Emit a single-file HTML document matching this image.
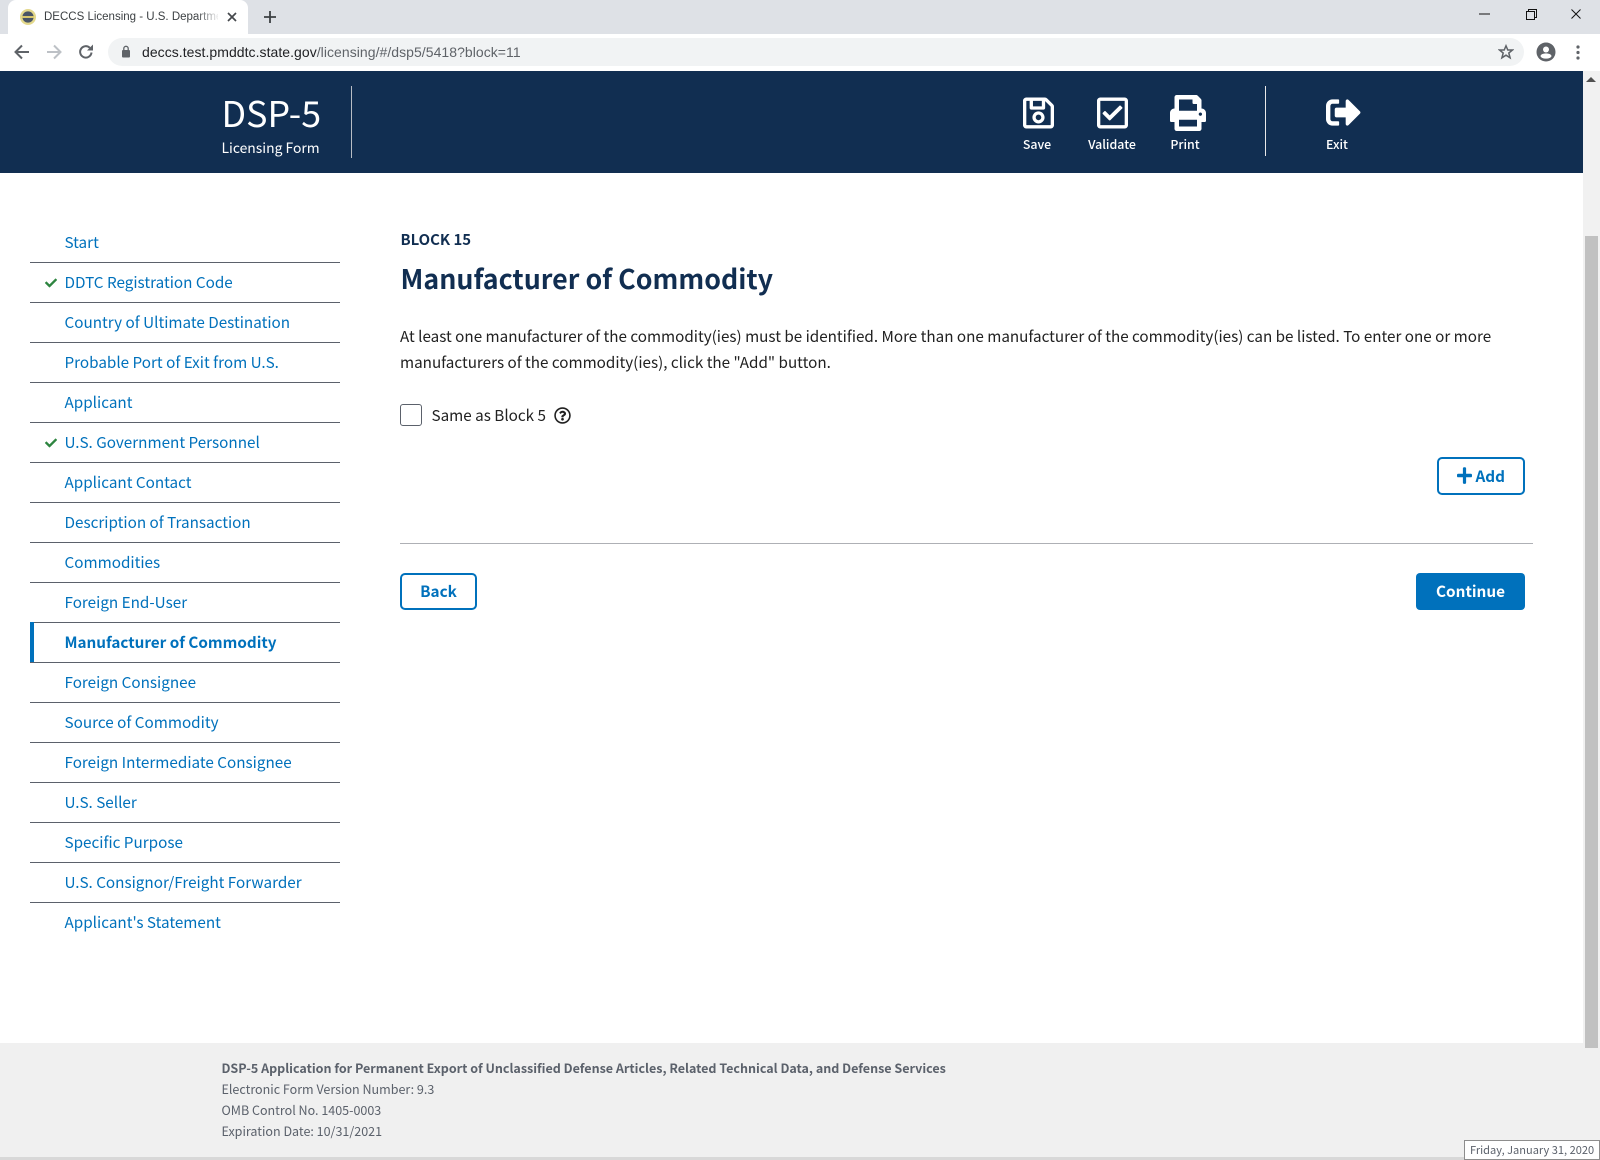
<!DOCTYPE html>
<html lang="en">
<head>
<meta charset="utf-8">
<title>DECCS Licensing - U.S. Department of State</title>
<style>
html,body{margin:0;padding:0;width:1600px;height:1160px;overflow:hidden;background:#fff}
body{position:relative;font-family:"Noto Sans CJK JP","Liberation Sans",sans-serif;color:#212121}
.a{position:absolute}
.t{position:absolute;white-space:nowrap;line-height:20px}
.c{transform:translateX(-50%)}
.nav{font-size:15.25px;color:#0071bc;left:64.5px}
.ln{position:absolute;left:30px;width:310px;height:1px;background:#5b616b}
.hl{font-size:12.4px;color:#fff;font-weight:500}
.ft{font-size:12.53px;color:#5b616b;left:221.5px}
svg{position:absolute;display:block}
.chk{left:45px;width:12px;height:12px;fill:#2e8540}
.ch{font-family:"Liberation Sans",Arial,sans-serif}
.btn{position:absolute;box-sizing:border-box;border:2px solid #0071bc;border-radius:5px;background:#fff}
.bt{font-size:15.3px;font-weight:700;color:#0071bc}
</style>
</head>
<body>
<!-- browser chrome -->
<div class="a" style="left:0;top:0;width:1600px;height:34px;background:#dee1e6"></div>
<div class="a" style="left:0;top:34px;width:1600px;height:37px;background:#fff"></div>
<div class="a" style="left:8px;top:0;width:240px;height:34px;background:#fff;border-radius:8px 8px 0 0"></div>
<svg style="left:20px;top:9px" width="16" height="16" viewBox="0 0 16 16"><circle cx="8" cy="8" r="8" fill="#e3d88c"/><circle cx="8" cy="8" r="5.6" fill="#4a5566"/><rect x="2" y="7" width="12" height="2" fill="#d8c76e"/></svg>
<div class="t ch" style="left:44px;top:7px;font-size:11.5px;color:#3c4043;width:174px;overflow:hidden">DECCS Licensing - U.S. Department of State</div>
<div class="a" style="left:196px;top:6px;width:24px;height:22px;background:linear-gradient(90deg,rgba(255,255,255,0),#fff)"></div>
<svg style="left:227px;top:12px" width="10" height="10" viewBox="0 0 10 10"><path d="M1 1L9 9M9 1L1 9" stroke="#45484c" stroke-width="1.7"/></svg>
<svg style="left:263px;top:10px" width="14" height="14" viewBox="0 0 14 14"><path d="M7 1V13M1 7H13" stroke="#3c4043" stroke-width="1.8"/></svg>
<svg style="left:1479px;top:13px" width="12" height="2" viewBox="0 0 12 2"><path d="M0 1H11" stroke="#111" stroke-width="1"/></svg>
<svg style="left:1526px;top:9px" width="11" height="11" viewBox="0 0 11 11"><path d="M.5 2.500H8.500V10.500H.5ZM2.500 2.500V.5H10.500V8.500H8.500" fill="none" stroke="#111"/></svg>
<svg style="left:1571px;top:9px" width="10" height="10" viewBox="0 0 10 10"><path d="M.5 .5L9.500 9.500M9.500 .5L.5 9.500" stroke="#111" stroke-width="1"/></svg>
<svg style="left:14px;top:44px" width="16" height="16" viewBox="0 0 16 16"><path d="M15 8H2M8 1.500L1.500 8L8 14.500" fill="none" stroke="#5f6368" stroke-width="2"/></svg>
<svg style="left:46px;top:44px" width="16" height="16" viewBox="0 0 16 16"><path d="M1 8H14M8 1.500L14.500 8L8 14.500" fill="none" stroke="#bdc1c6" stroke-width="2"/></svg>
<svg style="left:78px;top:44px" width="16" height="16" viewBox="0 0 16 16"><path d="M13.500 8.500A5.700 5.700 0 1 1 11.800 3.800" fill="none" stroke="#5f6368" stroke-width="2"/><path d="M9 6.500H15V.5Z" fill="#5f6368"/></svg>
<div class="a" style="left:108px;top:38px;width:1416px;height:28px;background:#f1f3f4;border-radius:14px"></div>
<svg style="left:121px;top:45px" width="10" height="13" viewBox="0 0 10 13"><rect x="1" y="5" width="8" height="7.500" rx="1" fill="#5f6368"/><path d="M2.800 5V3.500a2.200 2.200 0 0 1 4.400 0V5" fill="none" stroke="#5f6368" stroke-width="1.300"/></svg>
<div class="t ch" style="left:142px;top:42px;font-size:14px;letter-spacing:.045px;color:#5f6368"><span style="color:#202124">deccs.test.pmddtc.state.gov</span>/licensing/#/dsp5/5418?block=11</div>
<svg style="left:1498px;top:44px" width="16" height="16" viewBox="0 0 16 16"><path d="M8 1.800L9.800 6H14.500L10.800 9L12.100 13.800L8 11.200L3.900 13.800L5.200 9L1.500 6H6.200Z" fill="none" stroke="#5f6368" stroke-width="1.500"/></svg>
<svg style="left:1536px;top:42px" width="20" height="20" viewBox="0 0 20 20"><circle cx="10" cy="10" r="9.500" fill="#5f6368"/><circle cx="10" cy="7.500" r="3" fill="#fff"/><ellipse cx="10" cy="14" rx="5.500" ry="2.600" fill="#fff"/></svg>
<svg style="left:1576px;top:45px" width="4" height="15" viewBox="0 0 4 15"><circle cx="2" cy="2" r="1.600" fill="#5f6368"/><circle cx="2" cy="7.500" r="1.600" fill="#5f6368"/><circle cx="2" cy="13" r="1.600" fill="#5f6368"/></svg>

<!-- header -->
<div class="a" style="left:0;top:71px;width:1583px;height:102px;background:#112e51"></div>
<div class="t" style="left:221.5px;top:101.5px;font-size:35.8px;color:#fff;line-height:20px">DSP-5</div>
<div class="t" style="left:221.5px;top:138px;font-size:13.9px;color:#fff">Licensing Form</div>
<div class="a" style="left:351px;top:86px;width:1px;height:72px;background:#b8bdc4"></div>
<div class="a" style="left:1265px;top:86px;width:1px;height:70px;background:#e8e8e8"></div>
<svg style="left:1023px;top:95px;fill:#fff" width="31" height="36" viewBox="0 0 448 512"><path d="M433.941 129.941l-83.882-83.882A48 48 0 0 0 316.118 32H48C21.490 32 0 53.490 0 80v352c0 26.510 21.490 48 48 48h352c26.510 0 48-21.490 48-48V163.882a48 48 0 0 0-14.059-33.941zM272 80v80H144V80h128zm122 352H54a6 6 0 0 1-6-6V86a6 6 0 0 1 6-6h42v104c0 13.255 10.745 24 24 24h176c13.255 0 24-10.745 24-24V83.882l78.243 78.243a6 6 0 0 1 1.757 4.243V426a6 6 0 0 1-6 6zM224 232c-48.523 0-88 39.477-88 88s39.477 88 88 88 88-39.477 88-88-39.477-88-88-88zm0 128c-22.056 0-40-17.944-40-40s17.944-40 40-40 40 17.944 40 40-17.944 40-40 40z"/></svg>
<svg style="left:1097px;top:95px;fill:#fff" width="31" height="36" viewBox="0 0 448 512"><path d="M400 32H48C21.490 32 0 53.490 0 80v352c0 26.510 21.490 48 48 48h352c26.510 0 48-21.490 48-48V80c0-26.510-21.490-48-48-48zm0 400H48V80h352v352zm-35.864-241.724L191.547 361.480c-4.705 4.667-12.303 4.637-16.970-.068l-90.781-91.516c-4.667-4.705-4.637-12.303.069-16.971l22.719-22.536c4.705-4.667 12.303-4.637 16.970.069l59.792 60.277 141.352-140.216c4.705-4.667 12.303-4.637 16.970.068l22.536 22.718c4.667 4.706 4.637 12.304-.068 16.971z"/></svg>
<svg style="left:1170px;top:95px;fill:#fff" width="36" height="36" viewBox="0 0 512 512"><path d="M448 192V77.250c0-8.490-3.370-16.620-9.370-22.630L393.370 9.370c-6-6-14.140-9.370-22.630-9.370H96C78.330 0 64 14.330 64 32v160c-35.350 0-64 28.650-64 64v112c0 8.840 7.160 16 16 16h48v96c0 17.670 14.330 32 32 32h320c17.670 0 32-14.330 32-32v-96h48c8.840 0 16-7.160 16-16V256c0-35.350-28.650-64-64-64zm-64 256H128v-96h256v96zm0-224H128V64h192v48c0 8.840 7.160 16 16 16h48v96zm48 72c-13.250 0-24-10.750-24-24 0-13.260 10.750-24 24-24s24 10.740 24 24c0 13.250-10.750 24-24 24z"/></svg>
<svg style="left:1326px;top:95px;fill:#fff" width="35" height="35" viewBox="0 0 512 512"><path d="M497 273L329 441c-15 15-41 4.500-41-17v-96H152c-13.300 0-24-10.700-24-24v-96c0-13.300 10.700-24 24-24h136V88c0-21.400 25.900-32 41-17l168 168c9.300 9.400 9.300 24.600 0 34zM192 436v-40c0-6.600-5.400-12-12-12H96c-17.700 0-32-14.300-32-32V160c0-17.700 14.300-32 32-32h84c6.600 0 12-5.400 12-12V76c0-6.600-5.400-12-12-12H96c-53 0-96 43-96 96v192c0 53 43 96 96 96h84c6.600 0 12-5.400 12-12z"/></svg>
<div class="t hl c" style="left:1037px;top:134px">Save</div>
<div class="t hl c" style="left:1112px;top:134px">Validate</div>
<div class="t hl c" style="left:1185px;top:134px">Print</div>
<div class="t hl c" style="left:1337px;top:134px">Exit</div>

<!-- scrollbar -->
<div class="a" style="left:1583px;top:71px;width:17px;height:1000px;background:#f1f1f1"></div>
<div class="a" style="left:1586px;top:77px;width:0;height:0;border-left:5px solid transparent;border-right:5px solid transparent;border-bottom:5px solid #505050"></div>
<div class="a" style="left:1585px;top:236px;width:13px;height:812px;background:#c1c1c1"></div>

<!-- sidebar -->
<div class="t nav" style="top:232px">Start</div><div class="ln" style="top:262px"></div>
<svg class="chk" style="top:277px" viewBox="0 0 512 512"><path d="M173.898 439.404l-166.400-166.400c-9.997-9.997-9.997-26.206 0-36.204l36.203-36.204c9.997-9.998 26.207-9.998 36.204 0L192 312.690 432.095 72.596c9.997-9.997 26.207-9.997 36.204 0l36.203 36.204c9.997 9.997 9.997 26.206 0 36.204l-294.400 294.401c-9.998 9.997-26.207 9.997-36.204-.001z"/></svg>
<div class="t nav" style="top:272px">DDTC Registration Code</div><div class="ln" style="top:302px"></div>
<div class="t nav" style="top:312px">Country of Ultimate Destination</div><div class="ln" style="top:342px"></div>
<div class="t nav" style="top:352px">Probable Port of Exit from U.S.</div><div class="ln" style="top:382px"></div>
<div class="t nav" style="top:392px">Applicant</div><div class="ln" style="top:422px"></div>
<svg class="chk" style="top:437px" viewBox="0 0 512 512"><path d="M173.898 439.404l-166.400-166.400c-9.997-9.997-9.997-26.206 0-36.204l36.203-36.204c9.997-9.998 26.207-9.998 36.204 0L192 312.690 432.095 72.596c9.997-9.997 26.207-9.997 36.204 0l36.203 36.204c9.997 9.997 9.997 26.206 0 36.204l-294.400 294.401c-9.998 9.997-26.207 9.997-36.204-.001z"/></svg>
<div class="t nav" style="top:432px">U.S. Government Personnel</div><div class="ln" style="top:462px"></div>
<div class="t nav" style="top:472px">Applicant Contact</div><div class="ln" style="top:502px"></div>
<div class="t nav" style="top:512px">Description of Transaction</div><div class="ln" style="top:542px"></div>
<div class="t nav" style="top:552px">Commodities</div><div class="ln" style="top:582px"></div>
<div class="t nav" style="top:592px">Foreign End-User</div><div class="ln" style="top:622px"></div>
<div class="a" style="left:30px;top:622px;width:4px;height:41px;background:#0071bc"></div>
<div class="t nav" style="top:632px;font-weight:700">Manufacturer of Commodity</div><div class="ln" style="top:662px"></div>
<div class="t nav" style="top:672px">Foreign Consignee</div><div class="ln" style="top:702px"></div>
<div class="t nav" style="top:712px">Source of Commodity</div><div class="ln" style="top:742px"></div>
<div class="t nav" style="top:752px">Foreign Intermediate Consignee</div><div class="ln" style="top:782px"></div>
<div class="t nav" style="top:792px">U.S. Seller</div><div class="ln" style="top:822px"></div>
<div class="t nav" style="top:832px">Specific Purpose</div><div class="ln" style="top:862px"></div>
<div class="t nav" style="top:872px">U.S. Consignor/Freight Forwarder</div><div class="ln" style="top:902px"></div>
<div class="t nav" style="top:912px">Applicant's Statement</div>

<!-- main -->
<div class="t" style="left:400.5px;top:230px;font-size:14.9px;font-weight:700;color:#112e51">BLOCK 15</div>
<div class="t" style="left:400.5px;top:268px;font-size:26.8px;font-weight:700;color:#112e51">Manufacturer of Commodity</div>
<div class="t" style="left:400px;top:326px;font-size:15.22px">At least one manufacturer of the commodity(ies) must be identified. More than one manufacturer of the commodity(ies) can be listed. To enter one or more</div>
<div class="t" style="left:400px;top:351.5px;font-size:15.22px">manufacturers of the commodity(ies), click the "Add" button.</div>
<div class="a" style="left:400px;top:404px;width:20px;height:20px;border:1px solid #5b616b;border-radius:3px;background:#fff"></div>
<div class="t" style="left:431.5px;top:404.5px;font-size:15.25px">Same as Block 5</div>
<svg style="left:554px;top:407px;fill:#212121" width="17" height="17" viewBox="0 0 512 512"><path d="M256 8C119.043 8 8 119.083 8 256c0 136.997 111.043 248 248 248s248-111.003 248-248C504 119.083 392.957 8 256 8zm0 448c-110.532 0-200-89.431-200-200 0-110.495 89.472-200 200-200 110.491 0 200 89.471 200 200 0 110.530-89.431 200-200 200zm107.244-255.200c0 67.052-72.421 68.084-72.421 92.863V300c0 6.627-5.373 12-12 12h-45.647c-6.627 0-12-5.373-12-12v-8.659c0-35.745 27.100-50.034 47.579-61.516 17.561-9.845 28.324-16.541 28.324-29.579 0-17.246-21.999-28.693-39.784-28.693-23.189 0-33.894 10.977-48.942 29.969-4.057 5.120-11.460 6.071-16.666 2.124l-27.824-21.098c-5.107-3.872-6.251-11.066-2.644-16.363C184.846 131.491 214.940 112 261.794 112c49.071 0 101.450 38.304 101.450 88.800zM298 368c0 23.159-18.841 42-42 42s-42-18.841-42-42 18.841-42 42-42 42 18.841 42 42z"/></svg>
<div class="btn" style="left:1437px;top:457px;width:88px;height:38px"></div>
<svg style="left:1457px;top:466px;fill:#0071bc" width="15" height="19" viewBox="0 0 448 512" preserveAspectRatio="none"><path d="M416 208H272V64c0-17.670-14.330-32-32-32h-32c-17.670 0-32 14.330-32 32v144H32c-17.670 0-32 14.330-32 32v32c0 17.670 14.330 32 32 32h144v144c0 17.670 14.330 32 32 32h32c17.670 0 32-14.330 32-32V304h144c17.670 0 32-14.330 32-32v-32c0-17.670-14.330-32-32-32z"/></svg>
<div class="t bt" style="left:1475.5px;top:465.5px">Add</div>
<div class="a" style="left:400px;top:543px;width:1133px;height:1px;background:#aeb0b5"></div>
<div class="btn" style="left:400px;top:573px;width:77px;height:37px"></div>
<div class="t bt c" style="left:438.5px;top:581px">Back</div>
<div class="a" style="left:1416px;top:573px;width:109px;height:37px;background:#0071bc;border-radius:4px"></div>
<div class="t bt c" style="left:1470.5px;top:581px;color:#fff">Continue</div>

<!-- footer -->
<div class="a" style="left:0;top:1043px;width:1585px;height:114px;background:#f0f0f0"></div>
<div class="a" style="left:1598px;top:1043px;width:2px;height:114px;background:#f0f0f0"></div>
<div class="a" style="left:1585px;top:1048px;width:13px;height:109px;background:#f0f0f0"></div>
<div class="a" style="left:0;top:1157px;width:1600px;height:3px;background:#d8d8d8"></div>
<div class="t ft" style="top:1058px;font-weight:700">DSP-5 Application for Permanent Export of Unclassified Defense Articles, Related Technical Data, and Defense Services</div>
<div class="t ft" style="top:1079px">Electronic Form Version Number: 9.3</div>
<div class="t ft" style="top:1100px">OMB Control No. 1405-0003</div>
<div class="t ft" style="top:1121px">Expiration Date: 10/31/2021</div>
<div class="a" style="left:1464px;top:1140px;width:134px;height:18px;border:1px solid #8d8d8d;background:#fff"></div>
<div class="t" style="left:1470px;top:1140px;font-size:11.05px;color:#5b616b">Friday, January 31, 2020</div>
</body>
</html>
